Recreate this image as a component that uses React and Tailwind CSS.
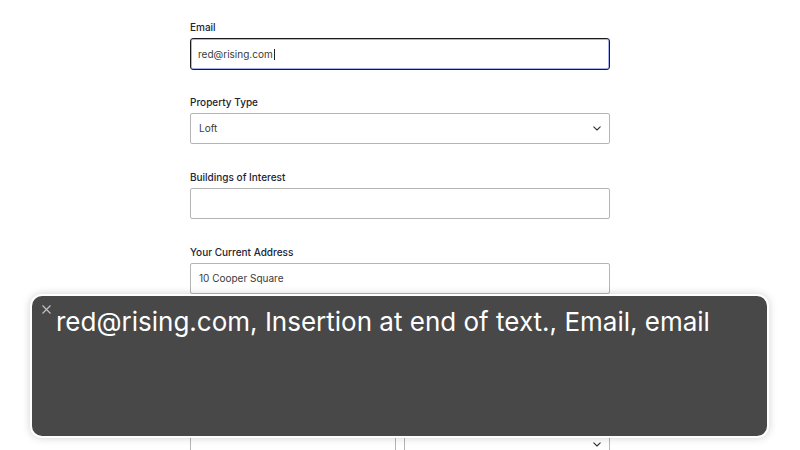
import React from "react";

function Label({ children }) {
  return (
    <label className="block text-[10px] font-medium leading-[14px] text-[#1c2433]">
      {children}
    </label>
  );
}

function Chevron() {
  return (
    <svg width="8" height="5" viewBox="0 0 8 5" fill="none" className="shrink-0">
      <path d="M0.8 0.8l3.2 3.2 3.2-3.2" stroke="#333" strokeWidth="1.1" strokeLinecap="round" strokeLinejoin="round" />
    </svg>
  );
}

function TextField({ label, value, focused, select, className = "" }) {
  return (
    <div className={className}>
      {label && <Label>{label}</Label>}
      <div
        className={
          (label ? "mt-[4px] " : "") +
          (focused
            ? "flex h-[32px] items-center rounded-[3px] border-[1.5px] border-[#1b1b1f] px-[7px] shadow-[inset_0_0_0_1px_#aab3ee]"
            : "flex h-[31px] items-center justify-between rounded-[2px] border border-[#b5b5b5] px-[8px]")
        }
      >
        <span className="text-[10px] text-[#3a3a3a]">
          {value}
          {focused && <span className="ml-[1px] inline-block h-[11px] w-px translate-y-[2px] bg-[#222]" />}
        </span>
        {select && <Chevron />}
      </div>
    </div>
  );
}

export default function App() {
  return (
    <div
      className="relative h-[450px] w-[800px] overflow-hidden bg-white"
      style={{ fontFamily: "Inter, 'Noto Sans', sans-serif" }}
    >
      <div className="mx-auto w-[420px] pt-[20px]">
        <TextField label="Email" value="red@rising.com" focused />
        <TextField label="Property Type" value="Loft" select className="mt-[25px]" />
        <TextField label="Buildings of Interest" value="" className="mt-[26px]" />
        <TextField label="Your Current Address" value="10 Cooper Square" className="mt-[26px]" />
        <div className="mt-[135px] grid grid-cols-2 gap-[8px]">
          <TextField value="" />
          <TextField value="" select />
        </div>
      </div>

      <div className="absolute left-[30px] top-[294px] h-[144px] w-[739px] rounded-[12px] bg-white p-[2px] shadow-[0_0_8px_rgba(0,0,0,0.18)]">
        <div className="relative h-full w-full rounded-[10px] bg-[#484848]">
          <svg width="9" height="9" viewBox="0 0 9 9" className="absolute left-[10px] top-[9px]">
            <path d="M0.5 0.5l8 8M8.5 0.5l-8 8" stroke="#c4c4c4" strokeWidth="1.1" />
          </svg>
          <p className="absolute left-[24px] top-[8px] whitespace-nowrap text-[26px] leading-[36px] text-white">
            red@rising.com, Insertion at end of text., Email, email
          </p>
        </div>
      </div>
    </div>
  );
}
